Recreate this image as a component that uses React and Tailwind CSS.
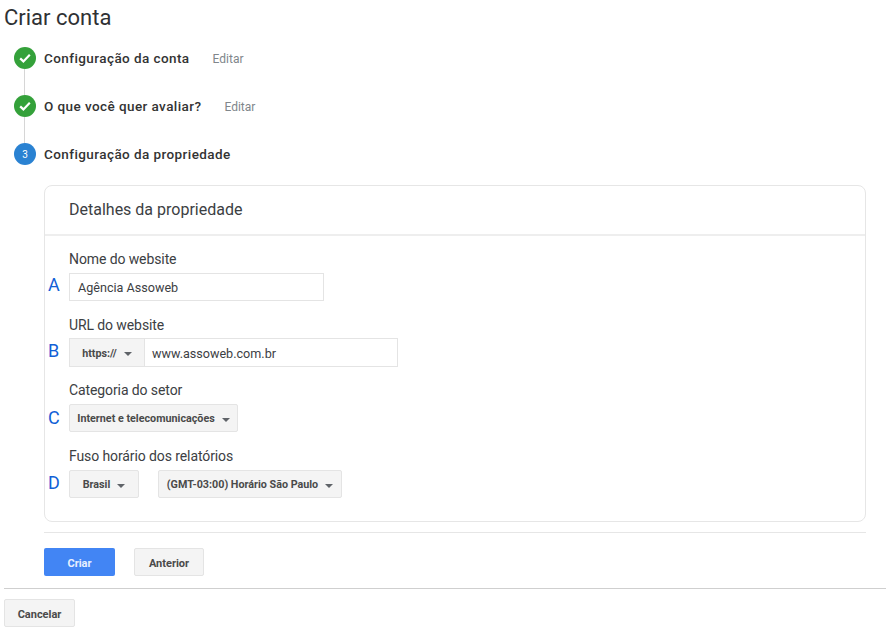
import React from 'react';

const DoneIcon = () => (
  <div className="w-[22px] h-[22px] rounded-full bg-[#34a13a] flex items-center justify-center shrink-0">
    <svg width="14" height="14" viewBox="0 0 14 14" fill="none">
      <path d="M2.2 7.4 L5.4 10.4 L11.8 3.8" stroke="#fff" strokeWidth="2.2" />
    </svg>
  </div>
);

const Step = ({ done, title, edit }) => (
  <div className="flex items-center h-[22px]">
    {done ? (
      <DoneIcon />
    ) : (
      <div className="w-[22px] h-[22px] rounded-full bg-[#2a82d2] flex items-center justify-center shrink-0 text-[10px] text-white">
        3
      </div>
    )}
    <span className="ml-2 pt-px text-[13.5px] font-medium tracking-[0.42px] text-[#333]">{title}</span>
    {edit && <span className="ml-[23px] pt-[2px] text-[12px] text-[#80868b]">Editar</span>}
  </div>
);

const Connector = () => <div className="ml-[10px] w-px h-[26px] bg-[#d6d6d6]" />;

const Caret = () => (
  <span className="ml-[7px] w-0 h-0 border-x-[4px] border-x-transparent border-t-[4px] border-t-[#5f6368]" />
);

const Select = ({ label, className }) => (
  <div
    className={`h-[28px] pt-[3px] flex items-center justify-center bg-[#f4f4f4] border border-[#e4e4e4] rounded-[2px] text-[10.75px] font-bold text-[#4a4a4a] ${className}`}
  >
    {label}
    <Caret />
  </div>
);

const Field = ({ letter, letterClass, label, children, className, gap = 'mt-[4px]' }) => (
  <div className={`relative ${className}`}>
    <div className="text-[14px] leading-[20px] tracking-[-0.1px] text-[#3c4043]">{label}</div>
    <span className={`absolute left-[-21px] text-[18px] leading-[22px] text-[#1260d6] ${letterClass}`}>{letter}</span>
    <div className={`${gap} flex`}>{children}</div>
  </div>
);

const FooterButton = ({ children, className }) => (
  <div
    className={`h-[28px] pt-[4px] flex items-center justify-center rounded-[2px] text-[11px] font-bold ${className}`}
  >
    {children}
  </div>
);

export default function App() {
  return (
    <div className="w-[890px] h-[633px] overflow-hidden bg-white px-1 font-['Roboto',sans-serif]">
      <h1 className="pt-[5px] h-[47px] text-[22px] leading-[26px] text-[#2f3134]">Criar conta</h1>

      <div className="ml-[10px]">
        <Step done title="Configuração da conta" edit />
        <Connector />
        <Step done title="O que você quer avaliar?" edit />
        <Connector />
        <Step title="Configuração da propriedade" />
      </div>

      <div className="ml-10 mr-5 mt-[20px] h-[337px] border border-[#e6e6e6] rounded-[8px]">
        <div className="h-[50px] flex items-center px-6 border-b-2 border-[#eeeeee] text-[16px] text-[#3c4043]">
          Detalhes da propriedade
        </div>
        <div className="px-6 pt-[13px]">
          <Field letter="A" letterClass="top-[25px]" label="Nome do website">
            <div className="w-[255px] h-[28px] pt-[3px] flex items-center px-2 border border-[#e4e4e4] text-[12.6px] text-[#3c4043]">
              Agência Assoweb
            </div>
          </Field>
          <Field letter="B" letterClass="top-[25px]" label="URL do website" className="mt-[14px]" gap="mt-[3px]">
            <Select label="https://" className="w-[76px] h-[29px] rounded-none" />
            <div className="w-[253px] h-[29px] pt-[3px] flex items-center px-[7px] border border-l-0 border-[#e4e4e4] text-[12.6px] text-[#3c4043]">
              www.assoweb.com.br
            </div>
          </Field>
          <Field letter="C" letterClass="top-[27px]" label="Categoria do setor" className="mt-[13px]">
            <Select label="Internet e telecomunicações" className="w-[169px]" />
          </Field>
          <Field letter="D" letterClass="top-[26px]" label="Fuso horário dos relatórios" className="mt-[14px]">
            <Select label="Brasil" className="w-[70px]" />
            <Select label="(GMT-03:00) Horário São Paulo" className="w-[184px] ml-[19px]" />
          </Field>
        </div>
      </div>

      <div className="ml-10 mr-5 mt-[10px] h-px bg-[#e6e6e6]" />

      <div className="ml-10 mt-[15px] flex gap-[19px]">
        <FooterButton className="w-[71px] bg-[#4285f4] text-[#e8f0fe]">Criar</FooterButton>
        <FooterButton className="w-[70px] bg-[#f4f4f4] border border-[#e4e4e4] text-[#4a4a4a]">Anterior</FooterButton>
      </div>

      <div className="mt-[12px] h-px bg-[#cfcfcf]" />

      <FooterButton className="w-[71px] mt-[10px] bg-[#f4f4f4] border border-[#e4e4e4] text-[#4a4a4a]">Cancelar</FooterButton>
    </div>
  );
}
